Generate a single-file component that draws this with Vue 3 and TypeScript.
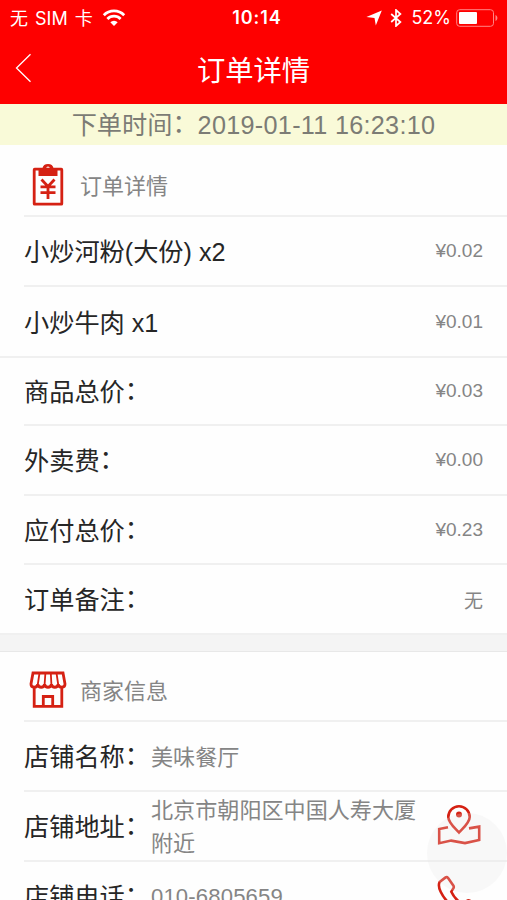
<script setup lang="ts">
interface Line {
  label: string
  colon: boolean
  value: string
  height: number
  full?: boolean
}

const orderLines: Line[] = [
  { label: '小炒河粉(大份) x2', colon: false, value: '¥0.02', height: 70 },
  { label: '小炒牛肉 x1', colon: false, value: '¥0.01', height: 71, full: true },
  { label: '商品总价', colon: true, value: '¥0.03', height: 68 },
  { label: '外卖费', colon: true, value: '¥0.00', height: 70 },
  { label: '应付总价', colon: true, value: '¥0.23', height: 69 },
  { label: '订单备注', colon: true, value: '无', height: 70, full: true },
]
</script>

<template>
  <div class="screen">
    <header class="top">
      <div class="status">
        <div class="carrier">
          <span>无 SIM 卡</span>
          <svg class="wifi" width="24" height="18" viewBox="0 0 24 18">
            <path d="M1.800 6.200a14.400 14.400 0 0 1 20.400 0" />
            <path d="M5.400 9.900a9.300 9.300 0 0 1 13.200 0" />
            <path class="solid" d="M12 17l-3.700-3.700a5.200 5.200 0 0 1 7.400 0z" />
          </svg>
        </div>
        <div class="clock">10:14</div>
        <div class="indicators">
          <svg class="arrow" width="16" height="16" viewBox="0 0 16 16">
            <path d="M15.800.4L9.800 15.600 8.500 8 .4 7z" />
          </svg>
          <svg class="bluetooth" width="12" height="18" viewBox="0 0 12 18">
            <path d="M1.200 5l9.200 8L6 17V1l4.400 4-9.200 8" />
          </svg>
          <span class="percent">52%</span>
          <svg class="battery" width="42" height="18" viewBox="0 0 42 18">
            <rect class="shell" x=".7" y=".7" width="36.800" height="16.600" rx="3" />
            <rect class="charge" x="3" y="3" width="18" height="12" rx="1" />
            <path class="cap" d="M39.500 6c2.500 1 2.500 5 0 6z" />
          </svg>
        </div>
      </div>
      <nav class="nav">
        <svg class="back" width="17" height="30" viewBox="0 0 17 30">
          <path d="M15.500 1.200L1.500 15l14 13.800" />
        </svg>
        <h1>订单详情</h1>
      </nav>
    </header>

    <div class="time">
      <div>下单时间<i class="colon">：</i></div>
      <span>2019-01-11 16:23:10</span>
    </div>

    <section>
      <div class="heading first">
        <svg class="icon" width="38" height="44" viewBox="0 0 38 44">
          <rect class="stroke" x="5.200" y="6.200" width="27.600" height="35" rx=".5" />
          <path class="fill" d="M9.500 5.500H13.400a5.700 5.400 0 0 1 11.200 0h3.900v7.500h-19zM19 3.400a1.800 1.800 0 1 0 0 3.600 1.800 1.800 0 0 0 0-3.600z" fill-rule="evenodd" />
          <path class="stroke" d="M12.500 16.500l6.500 7 6.500-7M11.500 23.800h15M11.500 29.600h15M19 23v13" />
        </svg>
        <h2>订单详情</h2>
      </div>
      <div
        v-for="line in orderLines"
        :key="line.label"
        class="row"
        :class="{ full: line.full }"
        :style="{ height: line.height + 'px' }"
      >
        <span class="label">{{ line.label }}<i v-if="line.colon" class="colon">：</i></span>
        <span class="price">{{ line.value }}</span>
      </div>
    </section>

    <div class="gap"></div>

    <section>
      <div class="heading second">
        <svg class="icon" width="38" height="44" viewBox="0 0 38 44">
          <path class="stroke" d="M4 5h30l2 11c0 4.200-6 4.200-6.800.4-.8 3.800-6 3.800-6.800 0-.8 3.800-6 3.800-6.800 0-.8 3.800-6 3.800-6.800 0C8 20.200 2 20.200 2 16z" />
          <path class="stroke thin" d="M10.500 5l-1.700 11.500M16.400 5l-.8 11.500M21.800 5l.6 11.500M27.500 5l1.700 11.500" />
          <path class="stroke" d="M5.200 18.500v19.900h27.600V18.500M14.300 38.400v-9.900h9.400v9.900" />
        </svg>
        <h2>商家信息</h2>
      </div>
      <div class="row">
        <span class="label">店铺名称<i class="colon">：</i></span>
        <span class="detail">美味餐厅</span>
      </div>
      <div class="row">
        <span class="label">店铺地址<i class="colon">：</i></span>
        <span class="detail">北京市朝阳区中国人寿大厦附近</span>
        <svg class="action" width="44" height="42" viewBox="0 0 44 42">
          <path d="M22 27.500C18.500 23.500 11.300 18 11.300 12a10.700 10.700 0 0 1 21.400 0C32.700 18 25.500 23.500 22 27.500z" />
          <circle cx="22" cy="9.500" r="3" />
          <path d="M11 22.200L2.200 24v14.200l12-2.600 13.800 2.500 14.200-3.100V21.600L32 23.400" />
        </svg>
      </div>
      <div class="row phone">
        <span class="label">店铺电话<i class="colon">：</i></span>
        <span class="detail">010-6805659</span>
        <svg class="action" width="44" height="42" viewBox="0 0 44 42">
          <path d="M2.600 7L8.300 2.600c1-.8 2-.6 2.800.4l5.200 7.500c.8 1.200.6 2.200-.2 3.200l-1.800 3c3 6.300 6.700 9.800 11.200 12.200l4.500-3.200c.8-.6 2-.6 3 .1l7 5c1 .8 1 2 .2 2.800L34 38.500C22 43-2.500 17 2.600 7z" />
        </svg>
      </div>
    </section>
    <div class="float"></div>
  </div>
</template>

<style>
body {
  margin: 0;
  overflow: hidden;
}
</style>

<style scoped>
.screen {
  position: relative;
  width: 507px;
  height: 900px;
  overflow: hidden;
  background: #fefefe;
  color: #262626;
  font-family: "Liberation Sans", "Noto Sans CJK SC", sans-serif;
}

.top {
  height: 104px;
  background: #fe0000;
  color: #fff;
}

.status {
  display: grid;
  grid-template-columns: 1fr auto 1fr;
  align-items: center;
  height: 35px;
  padding: 0 9px 0 10px;
  font-family: Inter, "Noto Sans CJK SC", sans-serif;
  font-size: 18px;
}

.carrier,
.indicators {
  display: flex;
  align-items: center;
}

.carrier {
  gap: 10px;
  white-space: nowrap;
  word-spacing: 2px;
}

.carrier span {
  padding-bottom: 2px;
}

.wifi {
  margin-left: -1px;
}

.wifi path {
  fill: none;
  stroke: #fff;
  stroke-width: 2.8;
}

.wifi .solid {
  fill: #fff;
  stroke: none;
}

.clock {
  font-size: 18px;
  font-weight: 600;
  letter-spacing: 0.9px;
  padding-left: 6px;
}

.indicators {
  justify-content: flex-end;
}

.arrow {
  fill: #fff;
  margin-right: 8px;
}

.bluetooth {
  fill: none;
  stroke: #fff;
  stroke-width: 1.7;
  margin-right: 9px;
}

.percent {
  margin-right: 5px;
}

.shell {
  fill: none;
  stroke: #ff8585;
  stroke-width: 1;
}

.charge {
  fill: #fff;
}

.cap {
  fill: #ff8585;
}

.nav {
  display: grid;
  grid-template-columns: 40px 1fr 40px;
  align-items: center;
  height: 66px;
}

.back {
  margin-left: 15px;
  fill: none;
  stroke: #fff;
  stroke-width: 1.3;
}

h1,
h2 {
  margin: 0;
  font-weight: 400;
}

h1 {
  text-align: center;
  font-size: 28.3px;
}

.time {
  display: flex;
  align-items: baseline;
  justify-content: center;
  height: 41px;
  background: #f9fad8;
  color: #7c7c75;
  font-size: 25.2px;
  line-height: 42px;
}

.time span {
  letter-spacing: 0.3px;
}

.colon {
  font-style: normal;
  line-height: 0;
  vertical-align: 2px;
}

.heading,
.row {
  display: flex;
  align-items: center;
  box-sizing: border-box;
  margin-left: 24px;
  border-bottom: 2px solid #f0f0f0;
}

.row {
  height: 70px;
}

.heading.first {
  height: 72px;
  padding-top: 10px;
}

.heading.second {
  height: 70px;
  padding-top: 7px;
}

.icon {
  margin-left: 5px;
}

.stroke {
  fill: none;
  stroke: #d52113;
  stroke-width: 2.8;
}

.thin {
  stroke-width: 1.8;
}

.fill {
  fill: #d52113;
}

h2 {
  margin-left: 13px;
  padding-bottom: 2px;
  color: #858585;
  font-size: 22px;
}

.row.full {
  margin-left: 0;
  padding-left: 24px;
}

.label {
  flex: none;
  width: 127px;
  padding-bottom: 2px;
  font-size: 25.2px;
  white-space: nowrap;
}

.price {
  margin-left: auto;
  margin-right: 24px;
  color: #858585;
  font-size: 19px;
}

.gap {
  box-sizing: border-box;
  height: 17px;
  background: #f4f4f4;
  border-bottom: 1px solid #e8e8e8;
}

.detail {
  width: 268px;
  padding-top: 2px;
  color: #858585;
  font-size: 22.1px;
  line-height: 33px;
}

.phone .detail {
  padding-top: 0;
  letter-spacing: 0.15px;
}

.action {
  flex: none;
  margin-left: 18px;
  fill: none;
  stroke: #d52113;
  stroke-width: 2.6;
}

.action circle {
  fill: #d52113;
  stroke: none;
}

.float {
  position: absolute;
  left: 427px;
  top: 813px;
  width: 80px;
  height: 80px;
  border-radius: 50%;
  background: rgba(230, 230, 230, 0.25);
}
</style>
